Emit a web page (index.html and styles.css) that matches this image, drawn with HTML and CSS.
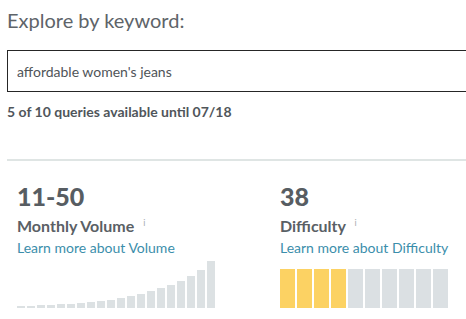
FILE: index.html
```html
<!DOCTYPE html>
<html lang="en">
<head>
  <meta charset="UTF-8" />
  <title>Keyword Explorer</title>
  <link rel="stylesheet" href="styles.css">
</head>
<body>
  <div class="page">
    <h1>Explore by keyword:</h1>

    <input class="search" type="text" value="affordable women's jeans" />

    <p class="quota">5 of 10 queries available until 07/18</p>

    <hr class="divider">

    <div class="stats">
      <div class="stat">
        <div class="stat-value">11-50</div>
        <div class="stat-label">Monthly Volume <sup class="info">i</sup></div>
        <a class="stat-link" href="#">Learn more about Volume</a>
        <div class="volume-chart">
          <span class="vbar" style="height:2px"></span>
          <span class="vbar" style="height:2px"></span>
          <span class="vbar" style="height:3px"></span>
          <span class="vbar" style="height:3px"></span>
          <span class="vbar" style="height:4px"></span>
          <span class="vbar" style="height:4px"></span>
          <span class="vbar" style="height:5px"></span>
          <span class="vbar" style="height:6px"></span>
          <span class="vbar" style="height:7px"></span>
          <span class="vbar" style="height:8px"></span>
          <span class="vbar" style="height:10px"></span>
          <span class="vbar" style="height:12px"></span>
          <span class="vbar" style="height:14px"></span>
          <span class="vbar" style="height:17px"></span>
          <span class="vbar" style="height:20px"></span>
          <span class="vbar" style="height:23px"></span>
          <span class="vbar" style="height:27px"></span>
          <span class="vbar" style="height:32px"></span>
          <span class="vbar" style="height:38px"></span>
          <span class="vbar" style="height:47px"></span>
        </div>
      </div>

      <div class="stat">
        <div class="stat-value">38</div>
        <div class="stat-label">Difficulty <sup class="info">i</sup></div>
        <a class="stat-link" href="#">Learn more about Difficulty</a>
        <div class="difficulty-chart">
          <span class="dbar on"></span>
          <span class="dbar on"></span>
          <span class="dbar on"></span>
          <span class="dbar on"></span>
          <span class="dbar"></span>
          <span class="dbar"></span>
          <span class="dbar"></span>
          <span class="dbar"></span>
          <span class="dbar"></span>
          <span class="dbar"></span>
        </div>
      </div>
    </div>
  </div>
</body>
</html>
```

FILE: styles.css
```css
body {
  margin: 0;
  background: #fff;
  font-family: Lato, "Open Sans", sans-serif;
  color: #555b60;
}

.page {
  width: 466px;
  height: 319px;
  overflow: hidden;
  padding-left: 7px;
  box-sizing: border-box;
}

h1 {
  margin: 8px 0 0;
  font-size: 20px;
  line-height: 24px;
  font-weight: 400;
  color: #5e6469;
}

.search {
  display: block;
  margin-top: 18px;
  width: 490px;
  height: 42px;
  box-sizing: border-box;
  padding: 0 9px;
  border: 1px solid #262626;
  border-radius: 0;
  font-family: Lato, sans-serif;
  font-size: 14px;
  color: #4f5458;
  background: #fff;
}

.quota {
  margin: 12px 0 0;
  font-size: 14px;
  line-height: 16px;
  font-weight: 700;
  color: #50565b;
}

.divider {
  margin: 39px 0 0;
  border: none;
  height: 2px;
  background: #dfe5e4;
}

.stats {
  display: grid;
  grid-template-columns: 263px 1fr;
  padding-left: 10px;
  margin-top: 21px;
}

.stat-value {
  font-size: 25px;
  line-height: 28px;
  font-weight: 900;
  color: #575d62;
}

.stat-label {
  margin-top: 3px;
  font-size: 16px;
  line-height: 20px;
  font-weight: 700;
  color: #5a6065;
}

.info {
  margin-left: 5px;
  font-size: 9px;
  font-weight: 400;
  color: #a8adb0;
}

.stat-link {
  display: block;
  margin-top: 4px;
  font-size: 14px;
  line-height: 16px;
  color: #3b8eab;
  text-decoration: none;
}

.volume-chart,
.difficulty-chart {
  display: flex;
  align-items: flex-end;
  height: 48px;
  margin-top: 4px;
}

.volume-chart {
  gap: 2px;
}

.vbar {
  width: 8px;
  background: #dce1e3;
}

.difficulty-chart {
  gap: 2px;
}

.dbar {
  width: 15px;
  height: 39px;
  background: #dbe0e3;
}

.dbar.on {
  background: #fcd263;
}
```
